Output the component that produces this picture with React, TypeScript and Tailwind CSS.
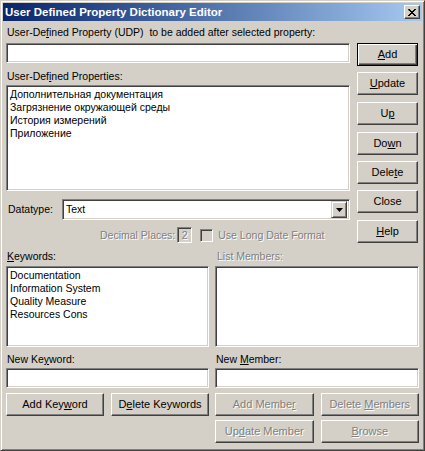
import React from 'react'

const FONT = "font-['Liberation_Sans',Arial,sans-serif] text-[10.5px] leading-[13px]"
const DIS = 'text-[#808080] [text-shadow:1px_1px_0_#fff]'

const PROPS = [
  'Дополнительная документация',
  'Загрязнение окружающей среды',
  'История измерений',
  'Приложение',
]

const KEYWORDS = ['Documentation', 'Information System', 'Quality Measure', 'Resources Cons']

interface BtnProps {
  children: React.ReactNode
  def?: boolean
  disabled?: boolean
  className?: string
}

const Btn: React.FC<BtnProps> = ({ children, def, disabled, className = '' }) => {
  const frame = def
    ? 'border border-black shadow-[inset_1px_1px_0_#fff,inset_-1px_-1px_0_#404040,inset_-2px_-2px_0_#808080]'
    : 'border border-t-white border-l-white border-r-[#404040] border-b-[#404040] shadow-[inset_-1px_-1px_0_#808080]'
  return (
    <div
      className={`${frame} h-[23px] bg-[#d4d0c8] flex items-center justify-center text-[11px] ${disabled ? DIS : 'text-black'} ${className}`}
    >
      <span>{children}</span>
    </div>
  )
}

const Sunken: React.FC<{ className?: string; children?: React.ReactNode }> = ({ className = '', children }) => (
  <div
    className={`border border-t-[#808080] border-l-[#808080] border-r-white border-b-white shadow-[inset_1px_1px_0_#404040,inset_-1px_-1px_0_#d4d0c8] ${className}`}
  >
    {children}
  </div>
)

const U: React.FC<{ children: React.ReactNode }> = ({ children }) => (
  <span className="underline underline-offset-[1px]">{children}</span>
)

export default function App() {
  return (
    <div
      className={`${FONT} w-[425px] h-[451px] bg-[#d4d0c8] border border-t-[#d4d0c8] border-l-[#d4d0c8] border-r-[#404040] border-b-[#404040] shadow-[inset_1px_1px_0_#fff,inset_-1px_-1px_0_#808080] p-[2px] flex flex-col select-none`}
    >
      {/* Title bar */}
      <div className="h-[18px] bg-linear-to-r from-[#0a246a] to-[#a6caf0] flex items-center justify-between pl-[2px] pr-[2px]">
        <span className="text-white font-bold text-[11.5px] leading-[14px]">User Defined Property Dictionary Editor</span>
        <div className="w-[16px] h-[14px] bg-[#d4d0c8] border border-t-white border-l-white border-r-[#404040] border-b-[#404040] shadow-[inset_-1px_-1px_0_#808080] flex items-center justify-center">
          <svg width="8" height="7" viewBox="0 0 8 7">
            <path d="M0 0h2v1h1v1h2v-1h1v-1h2v1h-1v1h-1v1h-1v1h1v1h1v1h1v1h-2v-1h-1v-1h-2v1h-1v1h-2v-1h1v-1h1v-1h1v-1h-1v-1h-1z" fill="#000" />
          </svg>
        </div>
      </div>

      <div className="flex-1 px-[3px] flex flex-col">
        {/* Top section */}
        <div className="flex gap-[7px]">
          <div className="w-[344px] flex flex-col pt-[5px]">
            <div className="h-[13px] pl-[1px]">
              User-De<U>f</U>ined Property (UDP)&nbsp; to be added after selected property:
            </div>
            <Sunken className="mt-[4px] h-[20px] bg-white" />
            <div className="mt-[7px] h-[13px] pl-[1px]">
              User-Def<U>i</U>ned Properties:
            </div>
            <Sunken className="mt-[2px] h-[106px] bg-white px-[3px] py-[2px]">
              {PROPS.map((p) => (
                <div key={p}>{p}</div>
              ))}
            </Sunken>
            <div className="mt-[8px] flex items-center">
              <div className="w-[56px] pl-[2px]">Datatype:</div>
              <Sunken className="flex-1 h-[21px] bg-white flex items-center justify-between pl-[3px] pr-[2px]">
                <span>Text</span>
                <div className="w-[16px] h-[17px] bg-[#d4d0c8] border border-t-[#d4d0c8] border-l-[#d4d0c8] border-r-[#404040] border-b-[#404040] shadow-[inset_1px_1px_0_#fff,inset_-1px_-1px_0_#808080] flex items-center justify-center">
                  <svg width="7" height="4" viewBox="0 0 7 4">
                    <path d="M0 0h7L3.5 4z" fill="#000" />
                  </svg>
                </div>
              </Sunken>
            </div>
            <div className="mt-[7px] h-[16px] flex items-center pl-[94px]">
              <span className={DIS}>Decimal Places:</span>
              <Sunken className="ml-[2px] w-[15px] h-[16px] bg-[#d4d0c8] flex items-center justify-center">
                <span className={DIS}>2</span>
              </Sunken>
              <Sunken className="ml-[8px] w-[13px] h-[13px] bg-[#d4d0c8]" />
              <span className={`ml-[5px] ${DIS}`}>Use Long Date Format</span>
            </div>
          </div>

          <div className="w-[61px] flex flex-col gap-[6px] pt-[22px]">
            <Btn def><U>A</U>dd</Btn>
            <Btn><U>U</U>pdate</Btn>
            <Btn className="mt-[1px]">U<U>p</U></Btn>
            <Btn className="mt-[1px]">Do<U>w</U>n</Btn>
            <Btn>Dele<U>t</U>e</Btn>
            <Btn>Close</Btn>
            <Btn className="mt-[1px]"><U>H</U>elp</Btn>
          </div>
        </div>

        {/* Bottom section */}
        <div className="mt-[7px] grid grid-cols-[203px_204px] gap-x-[6px]">
          <div className="flex flex-col">
            <div className="h-[13px] pl-[1px]"><U>K</U>eywords:</div>
            <Sunken className="mt-[3px] h-[81px] bg-white px-[3px] py-[2px]">
              {KEYWORDS.map((k) => (
                <div key={k}>{k}</div>
              ))}
            </Sunken>
            <div className="mt-[6px] h-[13px] pl-[1px]">New Ke<U>y</U>word:</div>
            <Sunken className="mt-[2px] h-[20px] bg-white" />
            <div className="mt-[5px] grid grid-cols-2 gap-x-[7px]">
              <Btn>Add Key<U>w</U>ord</Btn>
              <Btn>D<U>e</U>lete Keywords</Btn>
            </div>
          </div>
          <div className="flex flex-col">
            <div className={`h-[13px] pl-[2px] ${DIS}`}>List Members:</div>
            <Sunken className="mt-[3px] h-[81px] bg-white" />
            <div className="mt-[6px] h-[13px] pl-[1px]">New <U>M</U>ember:</div>
            <Sunken className="mt-[2px] h-[20px] bg-white" />
            <div className="mt-[5px] grid grid-cols-2 gap-x-[7px] gap-y-[4px]">
              <Btn disabled>Add Membe<U>r</U></Btn>
              <Btn disabled>Delete <U>M</U>embers</Btn>
              <Btn disabled>Up<U>d</U>ate Member</Btn>
              <Btn disabled><U>B</U>rowse</Btn>
            </div>
          </div>
        </div>
      </div>
    </div>
  )
}
